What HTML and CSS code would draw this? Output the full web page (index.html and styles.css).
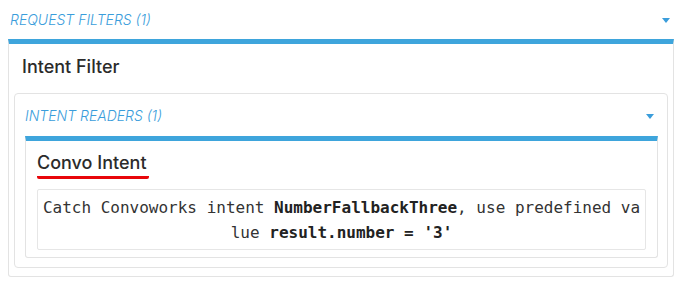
FILE: index.html
```
<!DOCTYPE html>
<html>
<head>
<meta charset="utf-8">
<title>Request filters</title>
<link rel="stylesheet" href="styles.css">
</head>
<body>

<div class="section">
  <div class="section-head">
    <span class="section-title">REQUEST FILTERS (1)</span>
    <span class="caret"></span>
  </div>
  <div class="panel">
    <h3 class="panel-title">Intent Filter</h3>
    <div class="subsection">
      <div class="section-head sub-head">
        <span class="section-title">INTENT READERS (1)</span>
        <span class="caret"></span>
      </div>
      <div class="panel card">
        <h4 class="card-title">Convo Intent</h4>
        <div class="desc">Catch Convoworks intent <b>NumberFallbackThree</b>, use predefined value <b>result.number = '3'</b></div>
      </div>
    </div>
  </div>
</div>

</body>
</html>
```

FILE: styles.css
```
body {
   margin: 0 8px;
   background-color: white;
   font-family: Inter, "Open Sans", sans-serif;
   color: #333;
}

.section-head {
   display: flex;
   align-items: center;
   justify-content: space-between;
   height: 39px;
   padding: 0 4px 0 2px;
}

.section-title {
   font-size: 14px;
   font-style: italic;
   font-weight: 300;
   color: #3a9ddb;
}

.caret {
   width: 0;
   height: 0;
   border-left: 4px solid transparent;
   border-right: 4px solid transparent;
   border-top: 5px solid #3a9ddb;
   margin-top: 2px;
}

.panel {
   border: 1px solid #e3e3e3;
   border-top: 5px solid #3ea5dc;
   border-radius: 0 0 3px 3px;
   padding: 0 5px 8px 5px;
}

.panel-title {
   margin: 0;
   padding: 12px 8px 0 8px;
   height: 37px;
   font-size: 18px;
   line-height: 22px;
   font-weight: 500;
   color: #2b2b2b;
}

.subsection {
   border: 1px solid #e3e3e3;
   border-radius: 4px;
   padding: 0 9px 9px 10px;
}

.sub-head {
   height: 42px;
   padding: 0 4px 0 0;
}

.card {
   padding: 11px 11px 7px 11px;
}

.card-title {
   display: inline-block;
   margin: 0;
   font-size: 18px;
   font-weight: 500;
   line-height: 22px;
   padding: 0 2px 2px 0;
   border-bottom: 3px solid #e8060b;
   border-radius: 2px;
   color: #2b2b2b;
}

.desc {
   margin-top: 10px;
   border: 1px solid #e6e6e6;
   border-radius: 2px;
   padding: 5px 4px 4px 4px;
   font-family: "DejaVu Sans Mono", monospace;
   font-size: 16px;
   line-height: 25px;
   text-align: center;
   word-break: break-all;
   color: #333;
}

.desc b {
   color: #222;
}
```
